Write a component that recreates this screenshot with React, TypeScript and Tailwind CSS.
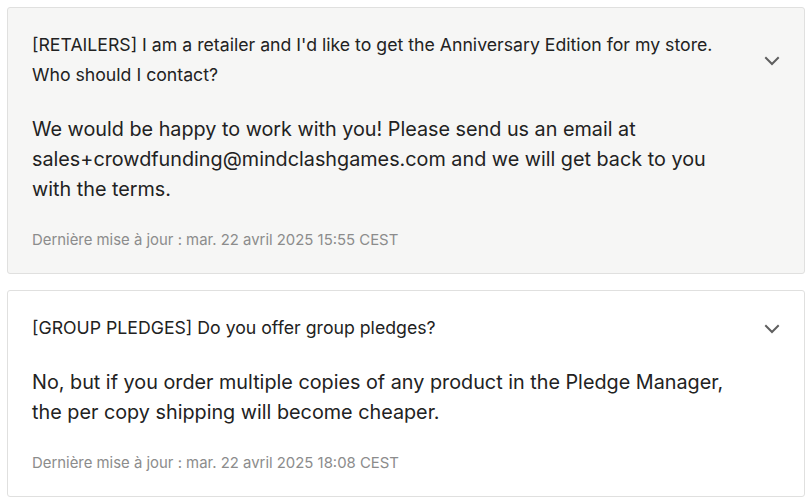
const faqs = [
  {
    question:
      "[RETAILERS] I am a retailer and I'd like to get the Anniversary Edition for my store. Who should I contact?",
    answer:
      "We would be happy to work with you! Please send us an email at sales+crowdfunding@mindclashgames.com and we will get back to you with the terms.",
    updated: "Dernière mise à jour : mar. 22 avril 2025 15:55 CEST",
    active: true,
  },
  {
    question: "[GROUP PLEDGES] Do you offer group pledges?",
    answer:
      "No, but if you order multiple copies of any product in the Pledge Manager, the per copy shipping will become cheaper.",
    updated: "Dernière mise à jour : mar. 22 avril 2025 18:08 CEST",
    active: false,
  },
];

function Chevron() {
  return (
    <svg width="16" height="10" viewBox="0 0 16 10" fill="none" className="mt-[2px] shrink-0 text-[#5f5f5f]">
      <path d="M2 2 8 8l6-6" stroke="currentColor" strokeWidth="2" strokeLinecap="square" />
    </svg>
  );
}

export default function App() {
  return (
    <div className="min-h-screen bg-white pt-[7px] pl-[7px] pr-[6px] font-['Inter',sans-serif] text-[#222]">
      <div className="flex flex-col gap-4">
        {faqs.map((f) => (
          <div
            key={f.question}
            className={`rounded-[3px] border border-[#e0e0df] px-6 pt-[22px] pb-[21px] ${
              f.active ? "bg-[#f6f6f5]" : "bg-white"
            }`}
          >
            <div className="flex items-center justify-between gap-6">
              <h3 className="max-w-[710px] text-[17.7px] leading-[30px] font-normal">{f.question}</h3>
              <Chevron />
            </div>
            <p className="mt-6 max-w-[712px] text-[19.8px] leading-[30px]">{f.answer}</p>
            <p className="mt-6 text-[14.9px] leading-6 text-[#8c8c8c]">{f.updated}</p>
          </div>
        ))}
      </div>
    </div>
  );
}
